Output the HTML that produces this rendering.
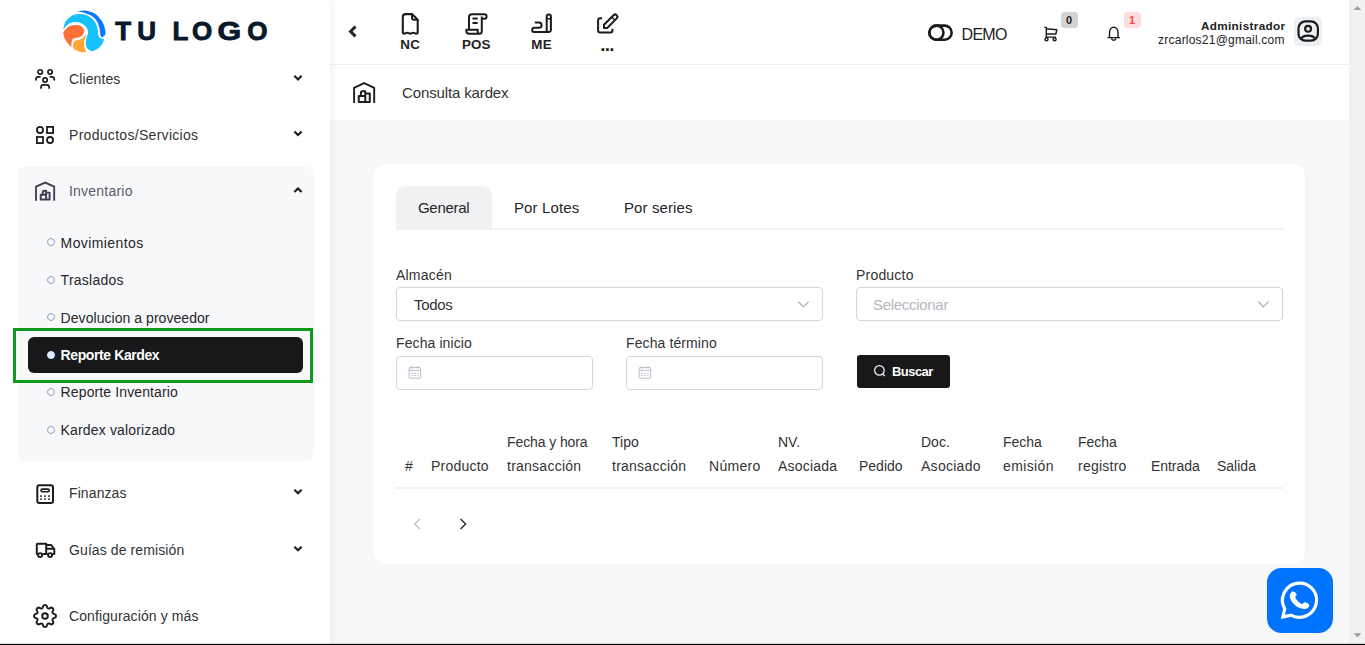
<!DOCTYPE html>
<html lang="es">
<head>
<meta charset="utf-8">
<title>Consulta kardex</title>
<style>
*{box-sizing:border-box;margin:0;padding:0}
html,body{width:1365px;height:645px;overflow:hidden;background:#f6f7f9}
body{position:relative;font-family:"Liberation Sans",sans-serif;color:#222;font-size:14px}
.abs{position:absolute}
.t{position:absolute;white-space:nowrap;line-height:1}
svg{position:absolute;overflow:visible}
/* sidebar */
#side{position:absolute;left:0;top:0;width:330px;height:645px;background:#fff;box-shadow:2px 0 9px rgba(20,30,50,.06);z-index:2}
#grp{position:absolute;left:17px;top:167px;width:297px;height:294px;background:#f7f8fa;border-radius:6.5px}
.mi{font-size:14px;color:#333;letter-spacing:.1px}
.si{font-size:14px;color:#26262b;letter-spacing:.15px}
.dot{position:absolute;width:8px;height:8px;border:1px solid #94a3c2;border-radius:50%;left:47px}
#pill{position:absolute;left:28px;top:337px;width:275px;height:36px;background:#18181b;border-radius:6px}
#hl{position:absolute;left:13px;top:328px;width:300px;height:55px;border:3px solid #109a1c}
/* header */
#head{position:absolute;left:330px;top:0;width:1019px;height:65px;background:#fff;border-bottom:1px solid #eeeff1}
#crumb{position:absolute;left:330px;top:65px;width:1019px;height:55px;background:#fff}
.hb{font-size:13.4px;font-weight:bold;color:#222;letter-spacing:.35px}
/* card */
#card{position:absolute;left:374px;top:164px;width:931px;height:399.5px;background:#fff;border-radius:12px}
.lbl{font-size:14px;color:#333}
.inp{position:absolute;height:34.4px;border:1px solid #d5d6d9;border-radius:4px;background:#fff}
.th{font-size:14px;color:#333;line-height:24px;position:absolute;white-space:nowrap}
/* scrollbar */
#sb{z-index:2;position:absolute;left:1349px;top:0;width:16px;height:645px;background:#f1f1f1}
#bl{z-index:5;position:absolute;left:0;top:643px;width:1365px;height:2px;background:linear-gradient(rgba(0,0,0,.13) 0,rgba(0,0,0,.13) 50%,#000 50%,#000 100%)}
</style>
</head>
<body>
<!-- ============ SIDEBAR ============ -->
<nav id="side">
  <!-- logo -->
  <svg id="logotxt" style="left:0;top:0" width="330" height="64"><text y="40" font-family="Liberation Sans, sans-serif" font-weight="bold" font-size="26" fill="#07192b" stroke="#07192b" stroke-width="0.9" stroke-linejoin="miter"><tspan x="115.2 137.3 160 172.6 192">TU LO</tspan><tspan x="217.4" textLength="23.6" lengthAdjust="spacingAndGlyphs">G</tspan><tspan x="247.2">O</tspan></text></svg>

  <div id="grp"></div>

  <div class="t mi" style="left:69px;top:72px">Clientes</div>
  <div class="t mi" style="left:69px;top:128px;letter-spacing:.3px">Productos/Servicios</div>
  <div class="t mi" style="left:69px;top:184px;color:#5b5b6b;letter-spacing:.22px">Inventario</div>

  <span class="dot" style="top:238px"></span><div class="t si" style="left:60.6px;top:236px;letter-spacing:.4px">Movimientos</div>
  <span class="dot" style="top:276px"></span><div class="t si" style="left:60.6px;top:273px;letter-spacing:.25px">Traslados</div>
  <span class="dot" style="top:313px"></span><div class="t si" style="left:60.6px;top:311px;letter-spacing:.05px">Devolucion a proveedor</div>
  <div id="pill"></div>
  <span class="dot" style="top:350.8px;left:47px;width:8px;height:8px;background:#dcebff;border-color:#dcebff"></span><div class="t si" style="left:60.6px;top:348px;color:#fff;font-weight:bold;letter-spacing:-.4px">Reporte Kardex</div>
  <div id="hl"></div>
  <span class="dot" style="top:388.4px"></span><div class="t si" style="left:60.6px;top:385px;letter-spacing:.12px">Reporte Inventario</div>
  <span class="dot" style="top:425.6px"></span><div class="t si" style="left:60.6px;top:423px">Kardex valorizado</div>

  <div class="t mi" style="left:69px;top:486px">Finanzas</div>
  <div class="t mi" style="left:69px;top:543px">Guías de remisión</div>
  <div class="t mi" style="left:69px;top:609px">Configuración y más</div>
</nav>

<!-- ============ HEADER ============ -->
<header id="head"></header>
<div id="crumb"></div>
<div class="t hb" style="left:400.2px;top:37.6px">NC</div>
<div class="t hb" style="left:462px;top:37.6px;letter-spacing:.1px">POS</div>
<div class="t hb" style="left:531.3px;top:37.6px">ME</div>
<div class="t hb" style="left:600.2px;top:34.8px;font-size:19px;letter-spacing:-.8px">...</div>
<div class="t" style="left:961.6px;top:27.2px;font-size:16px;color:#222;letter-spacing:-.75px">DEMO</div>
<div class="t" style="right:79.6px;top:19.9px;font-size:11.7px;font-weight:bold;color:#222;letter-spacing:.35px">Administrador</div>
<div class="t" style="right:80.3px;top:34px;font-size:12px;color:#222;letter-spacing:.22px">zrcarlos21@gmail.com</div>
<div class="abs" style="left:1294.2px;top:17px;width:28px;height:28.8px;border-radius:5px;background:#eef1f4"></div>
<div class="abs" style="left:1061px;top:12px;width:17px;height:16px;border-radius:4px;background:#d3d3d3"></div>
<div class="t" style="left:1066px;top:15px;font-size:11px;font-weight:bold;color:#222">0</div>
<div class="abs" style="left:1124px;top:12px;width:17px;height:16px;border-radius:4px;background:#ffdcdc"></div>
<div class="t" style="left:1129px;top:15px;font-size:11px;font-weight:bold;color:#f4484e">1</div>

<div class="t" style="left:402px;top:85px;font-size:15px;color:#333;letter-spacing:-.13px">Consulta kardex</div>

<!-- ============ CARD ============ -->
<main id="card"></main>
<div class="abs" style="left:396px;top:228px;width:887px;height:2px;background:#f1f3f5"></div>
<div class="abs" style="left:396px;top:186px;width:96px;height:43px;background:#eff1f3;border-radius:9px 9px 0 0"></div>
<div class="t" style="left:418px;top:200px;font-size:15px;color:#26262b;letter-spacing:-.3px">General</div>
<div class="t" style="left:514px;top:200px;font-size:15px;color:#26262b;letter-spacing:.12px">Por Lotes</div>
<div class="t" style="left:624px;top:200px;font-size:15px;color:#26262b;letter-spacing:.1px">Por series</div>

<div class="t lbl" style="left:396px;top:268px;letter-spacing:.2px">Almacén</div>
<div class="inp" style="left:396px;top:287px;width:427px"></div>
<div class="t" style="left:414px;top:297px;font-size:15px;color:#333;letter-spacing:-.3px">Todos</div>
<div class="t lbl" style="left:856px;top:268px;letter-spacing:.2px">Producto</div>
<div class="inp" style="left:856px;top:287px;width:427px"></div>
<div class="t" style="left:873px;top:297px;font-size:15px;color:#b5b8be;letter-spacing:-.3px">Seleccionar</div>

<div class="t lbl" style="left:396px;top:336px;letter-spacing:.1px">Fecha inicio</div>
<div class="inp" style="left:396px;top:356px;width:197px;height:34.4px"></div>
<div class="t lbl" style="left:626px;top:336px;letter-spacing:.1px">Fecha término</div>
<div class="inp" style="left:626px;top:356px;width:197px;height:34.4px"></div>

<div class="abs" style="left:857px;top:355px;width:93px;height:33px;background:#18181b;border-radius:3px"></div>
<div class="t" style="left:892px;top:365px;font-size:13px;font-weight:bold;color:#fff;letter-spacing:-.55px">Buscar</div>

<!-- table head -->
<div class="th" style="left:405px;top:454px">#</div>
<div class="th" style="left:431px;top:454px;letter-spacing:.22px">Producto</div>
<div class="th" style="left:507px;top:430px"><span style="letter-spacing:-.1px">Fecha y hora</span><br><span style="letter-spacing:.25px">transacción</span></div>
<div class="th" style="left:612px;top:430px">Tipo<br><span style="letter-spacing:.25px">transacción</span></div>
<div class="th" style="left:709px;top:454px;letter-spacing:.3px">Número</div>
<div class="th" style="left:778px;top:430px">NV.<br><span style="letter-spacing:.22px">Asociada</span></div>
<div class="th" style="left:859px;top:454px">Pedido</div>
<div class="th" style="left:921px;top:430px">Doc.<br><span style="letter-spacing:.27px">Asociado</span></div>
<div class="th" style="left:1003px;top:430px">Fecha<br><span style="letter-spacing:.37px">emisión</span></div>
<div class="th" style="left:1078px;top:430px">Fecha<br><span style="letter-spacing:.24px">registro</span></div>
<div class="th" style="left:1151px;top:454px;letter-spacing:-.05px">Entrada</div>
<div class="th" style="left:1217px;top:454px">Salida</div>
<div class="abs" style="left:396px;top:487px;width:887px;height:2px;background:#f0f2f4"></div>

<!-- whatsapp -->
<div class="abs" style="left:1267px;top:567.6px;width:65.5px;height:65.4px;border-radius:14.5px;background:#0073ff"></div>

<!-- scrollbar + bottom line -->
<div id="sb"></div>
<div id="bl"></div>
<!-- ============ ICON OVERLAY (page coordinates) ============ -->
<svg id="ico" style="left:0;top:0;pointer-events:none;z-index:3" width="1365" height="645" viewBox="0 0 1365 645" fill="none" stroke-linecap="butt" stroke-linejoin="miter">
<defs>
  <g id="wh">
    <path d="M0.9 18.2 V4 L10.1 0 L19.1 4 V18.2" />
    <path d="M5.6 12.2 H11 V16.8 H5.6 Z M11 10 H14.5 V16.8 H11 M7.7 12.2 V9.4 a1.3 1.3 0 0 1 1.3 -1.3 H11 V12.2" stroke-linejoin="round" stroke-width="1.95"/>
  </g>
  <path id="chd" d="M-3.6 -2 L0 1.6 L3.6 -2" stroke="#1c1c1c" stroke-width="2.15"/>
</defs>

<!-- logo -->
<svg x="55" y="3" width="60" height="57" viewBox="0 0 679 645" stroke="none">
<path fill="#0b79ff" d="M245.0 100.0 C259.2 97.5 295.8 81.7 330.0 85.0 C364.2 88.3 415.0 97.5 450.0 120.0 C485.0 142.5 519.7 185.0 540.0 220.0 C560.3 255.0 569.0 304.7 572.0 330.0 C575.0 355.3 560.3 365.0 558.0 372.0 C554.2 374.7 542.7 389.2 535.0 388.0 C527.3 386.8 515.8 368.8 512.0 365.0 C510.8 352.5 512.0 317.5 505.0 290.0 C498.0 262.5 487.5 225.0 470.0 200.0 C452.5 175.0 425.0 155.3 400.0 140.0 C375.0 124.7 345.8 114.7 320.0 108.0 C294.2 101.3 257.5 101.3 245.0 100.0 Z"/>
<path fill="#17c3ff" d="M93.0 300.0 C97.5 285.0 102.2 236.7 120.0 210.0 C137.8 183.3 170.0 154.2 200.0 140.0 C230.0 125.8 266.7 121.7 300.0 125.0 C333.3 128.3 373.3 142.5 400.0 160.0 C426.7 177.5 445.8 205.0 460.0 230.0 C474.2 255.0 479.7 286.7 485.0 310.0 C490.3 333.3 486.2 355.0 492.0 370.0 C497.8 385.0 509.3 393.3 520.0 400.0 C530.7 406.7 550.0 408.3 556.0 410.0 C551.7 420.0 542.7 451.7 530.0 470.0 C517.3 488.3 498.3 507.3 480.0 520.0 C461.7 532.7 430.0 541.7 420.0 546.0 C411.7 541.7 381.7 532.7 370.0 520.0 C358.3 507.3 352.5 490.0 350.0 470.0 C347.5 450.0 350.8 423.3 355.0 400.0 C359.2 376.7 375.8 351.7 375.0 330.0 C374.2 308.3 364.2 287.5 350.0 270.0 C335.8 252.5 311.7 234.2 290.0 225.0 C268.3 215.8 243.3 212.5 220.0 215.0 C196.7 217.5 171.2 225.8 150.0 240.0 C128.8 254.2 102.5 290.0 93.0 300.0 Z"/>
<path fill="#ff6f38" d="M93.0 335.0 C102.5 324.2 127.2 284.2 150.0 270.0 C172.8 255.8 205.0 250.8 230.0 250.0 C255.0 249.2 283.3 255.0 300.0 265.0 C316.7 275.0 326.7 295.8 330.0 310.0 C333.3 324.2 328.3 337.5 320.0 350.0 C311.7 362.5 297.5 376.7 280.0 385.0 C262.5 393.3 230.0 392.5 215.0 400.0 C200.0 407.5 195.0 413.3 190.0 430.0 C185.0 446.7 185.8 488.3 185.0 500.0 C177.5 491.7 153.3 468.3 140.0 450.0 C126.7 431.7 112.8 409.2 105.0 390.0 C97.2 370.8 95.0 344.2 93.0 335.0 Z"/>
<path fill="#ffa637" d="M350.0 345.0 C346.7 350.8 340.0 369.2 330.0 380.0 C320.0 390.8 306.7 402.5 290.0 410.0 C273.3 417.5 243.3 418.3 230.0 425.0 C216.7 431.7 214.2 437.5 210.0 450.0 C205.8 462.5 202.5 486.7 205.0 500.0 C207.5 513.3 221.7 525.0 225.0 530.0 C235.8 534.2 268.8 550.7 290.0 555.0 C311.2 559.3 341.7 555.8 352.0 556.0 C349.2 546.7 338.7 519.3 335.0 500.0 C331.3 480.7 328.3 458.3 330.0 440.0 C331.7 421.7 341.7 405.8 345.0 390.0 C348.3 374.2 349.2 352.5 350.0 345.0 Z"/>

</svg>

<!-- Clientes -->
<g stroke="#1c1c1c" stroke-width="1.7">
  <circle cx="40.2" cy="71.9" r="2.15"/><circle cx="50.1" cy="71.9" r="2.15"/><circle cx="45.1" cy="80" r="2.15"/>
  <path d="M40.6 76.9 H38.4 a2.5 2.5 0 0 0 -2.5 2.5 V80.6"/>
  <path d="M49.6 76.9 H51.8 a2.5 2.5 0 0 1 2.5 2.5 V80.6"/>
  <path d="M41 88.8 V87.3 a2.5 2.5 0 0 1 2.5 -2.5 h3.2 a2.5 2.5 0 0 1 2.5 2.5 V88.8"/>
</g>
<!-- Productos -->
<g stroke="#1c1c1c" stroke-width="1.8">
  <circle cx="40" cy="130" r="3.05"/><rect x="47" y="126.9" width="6.1" height="6.1"/>
  <rect x="36.9" y="137" width="6.1" height="6.1"/><circle cx="50.05" cy="140.05" r="3.05"/>
</g>
<!-- Inventario -->
<use href="#wh" x="35.1" y="182.6" stroke="#413f50" stroke-width="1.85"/>
<!-- Finanzas -->
<g stroke="#1c1c1c">
  <rect x="37.3" y="485.2" width="15.7" height="17.7" rx="2.2" stroke-width="2"/>
  <rect x="41" y="489.1" width="8.3" height="2.7" rx="1.35" stroke-width="1.6"/>
  <g fill="#1c1c1c" stroke="none">
    <rect x="40.2" y="495.3" width="1.6" height="1.6"/><rect x="44.2" y="495.3" width="1.6" height="1.6"/><rect x="48.2" y="495.3" width="1.6" height="1.6"/>
    <rect x="40.2" y="498.3" width="1.6" height="1.6"/><rect x="44.2" y="498.3" width="1.6" height="1.6"/><rect x="48.2" y="498.3" width="1.6" height="1.6"/>
  </g>
</g>
<!-- Guias -->
<g stroke="#1c1c1c" stroke-width="1.95" stroke-linejoin="round">
  <path d="M37.8 554 H36.8 V544.6 a.8 .8 0 0 1 .8 -.8 H46.2 V554 H42.6"/>
  <path d="M46.2 545 H51.2 L54.3 549 V554 H52.6 M46.2 554 H47.6 M46.2 548.7 H54"/>
  <circle cx="40.1" cy="555.1" r="2"/><circle cx="50.1" cy="555.1" r="2"/>
</g>
<!-- Config -->
<g stroke="#1c1c1c" stroke-width="1.9" stroke-linejoin="round">
  <path d="M42.44 608.11 L43.40 605.93 C43.22 604.74 46.78 604.74 46.60 605.93 L47.56 608.11 Q48.06 608.61 48.77 608.60 L51.00 607.75 C51.70 606.78 54.22 609.30 53.25 610.00 L52.40 612.23 Q52.39 612.94 52.89 613.44 L55.07 614.40 C56.26 614.22 56.26 617.78 55.07 617.60 L52.89 618.56 Q52.39 619.06 52.40 619.77 L53.25 622.00 C54.22 622.70 51.70 625.22 51.00 624.25 L48.77 623.40 Q48.06 623.39 47.56 623.89 L46.60 626.07 C46.78 627.26 43.22 627.26 43.40 626.07 L42.44 623.89 Q41.94 623.39 41.23 623.40 L39.00 624.25 C38.30 625.22 35.78 622.70 36.75 622.00 L37.60 619.77 Q37.61 619.06 37.11 618.56 L34.93 617.60 C33.74 617.78 33.74 614.22 34.93 614.40 L37.11 613.44 Q37.61 612.94 37.60 612.23 L36.75 610.00 C35.78 609.30 38.30 606.78 39.00 607.75 L41.23 608.60 Q41.94 608.61 42.44 608.11 Z"/>
  <circle cx="45" cy="616" r="2.8"/>
</g>
<!-- sidebar chevrons -->
<use href="#chd" x="298" y="77.8"/>
<use href="#chd" x="298" y="133.5"/>
<use href="#chd" x="298" y="190" transform="rotate(180 298 190)"/>
<use href="#chd" x="298" y="491.7"/>
<use href="#chd" x="298" y="548.7"/>

<!-- header: back chevron -->
<path d="M355.5 26.56 L350.6 31.45 L355.5 36.34" stroke="#222" stroke-width="3"/>
<!-- NC -->
<g stroke="#1c1c1c" stroke-width="2" stroke-linejoin="round">
  <path d="M402.8 32 V17 a2.9 2.9 0 0 1 2.9 -2.9 H412 L417.7 19.8 V32 Q417.7 33.7 416.1 33.7 C414.6 33.7 414.6 32.7 413.1 32.7 C411.6 32.7 411.6 33.7 410.1 33.7 C408.6 33.7 408.6 32.7 407.1 32.7 C405.6 32.7 405.6 33.7 404.3 33.7 Q402.8 33.7 402.8 32" stroke-width="2.1"/>
  <path d="M412 14.4 V18 a1.8 1.8 0 0 0 1.8 1.8 H417.5" stroke-width="2"/>
</g>
<!-- POS -->
<g stroke="#1c1c1c" stroke-width="2" stroke-linejoin="round">
  <path d="M469 29.7 V17.3 a3 3 0 0 1 3 -3 H484.4 a2.2 2.2 0 0 1 0 4.4 H481.8"/>
  <path d="M481.8 16.5 V31.3 a2.5 2.5 0 0 1 -2.5 2.5 H469 a2.7 2.7 0 0 1 -2.7 -2.7 V29.7 H477.7 V31.8 a2 2 0 0 0 2 2"/>
  <path d="M472.5 18.5 H477.7 M472.5 23 H477.7"/>
</g>
<!-- ME -->
<g stroke="#1c1c1c" stroke-width="2" stroke-linejoin="round" stroke-linecap="round">
  <path d="M535.6 22.6 H539 a2.6 2.6 0 0 1 0 5.2 H534.3 a2.1 2.1 0 0 0 0 4.2 H548.8 a2.1 2.1 0 0 0 2.1 -2.1 V16.5 a2.1 2.1 0 0 0 -4.2 0 V31.8"/>
  <path d="M546.7 18.8 H550.9" stroke-width="1.5"/>
</g>
<!-- Edit -->
<g stroke="#1c1c1c" stroke-width="2" stroke-linejoin="round">
  <path d="M602 18.3 H600.1 a2 2 0 0 0 -2 2 V30.6 a2 2 0 0 0 2 2 H610.4 a2 2 0 0 0 2 -2 V28.8"/>
  <path d="M604 28 V24.7 L613.5 15.2 a2.25 2.25 0 0 1 3.2 3.2 L607.2 28 Z"/>
  <path d="M611.7 17 L614.9 20.2" stroke-width="1.6"/>
</g>
<!-- toggle -->
<g stroke="#1c1c1c" stroke-width="2.55">
  <rect x="929.35" y="25.6" width="22.3" height="14.1" rx="7.05"/>
  <circle cx="936.4" cy="32.65" r="7.05"/>
</g>
<!-- cart -->
<g stroke="#1c1c1c" stroke-width="1.4" stroke-linejoin="round">
  <path d="M1044.3 27.4 H1046.3 V37.1 H1056 M1046.3 28.7 L1056.8 29.7 L1055.9 34 H1046.3"/>
  <circle cx="1046.5" cy="39.2" r="1.5"/><circle cx="1054.6" cy="39.2" r="1.5"/>
</g>
<!-- bell -->
<g stroke="#1c1c1c" stroke-width="1.4" stroke-linejoin="round">
  <path d="M1107.4 37.6 H1120.1 M1109.5 37.6 V32.4 a4.25 5.2 0 0 1 8.5 0 V37.6"/>
  <path d="M1111.4 38.4 a2.4 2.4 0 0 0 4.7 0"/>
</g>
<!-- avatar -->
<g stroke="#1c1c1c" stroke-width="2.2" stroke-linejoin="round">
  <rect x="1298.5" y="21.3" width="19.4" height="19.4" rx="7"/>
  <circle cx="1308.1" cy="28.8" r="2.95"/>
  <path d="M1301 39.3 C1302.6 34.4 1313.6 34.4 1315.3 39.3"/>
</g>
<!-- breadcrumb warehouse -->
<g stroke="#1f1f1f">
  <path d="M354.1 102.9 V87.8 L364.15 83.1 L374.2 87.8 V102.9" stroke-width="1.9"/>
  <path d="M358.75 96.1 H365.3 V101.9 H358.75 Z M365.3 93.4 H369.8 V101.9 H365.3 M360.9 96.1 V92.7 a1.5 1.5 0 0 1 1.5 -1.5 H365.3 V96.1" stroke-width="2" stroke-linejoin="round"/>
</g>

<!-- select chevrons -->
<path d="M798.2 301.6 L803.4 306.8 L808.6 301.6" stroke="#a0a3a9" stroke-width="1.1"/>
<path d="M1258.2 301.6 L1263.4 306.8 L1268.6 301.6" stroke="#a0a3a9" stroke-width="1.1"/>
<!-- calendars -->
<g id="cal" stroke="#b7bdca" stroke-width="1">
  <rect x="409.1" y="367.6" width="11.6" height="10.6" rx=".8"/>
  <path d="M409.1 370.3 H420.7 M411.6 366.1 V368.6 M418.1 366.1 V368.6"/>
  <path d="M411.2 373.3 H418.8 M411.2 375.6 H418.8" stroke-dasharray="1.7 1.25" stroke-width=".9"/>
</g>
<use href="#cal" x="230"/>
<!-- search -->
<g stroke="#f2f2f2" stroke-width="1.25" stroke-linecap="round">
  <circle cx="879.4" cy="370.4" r="4.75"/><path d="M883 374.2 L884.5 375.7"/>
</g>
<!-- pagination -->
<path d="M419.8 519 L414.8 524 L419.8 529" stroke="#c0c4cc" stroke-width="1.55"/>
<path d="M460.6 519 L465.6 524 L460.6 529" stroke="#303133" stroke-width="1.5"/>

<!-- whatsapp icon -->
<path d="M1284.7 608.75 L1282.9 616.9 L1291.45 615.3 A17.1 17.1 0 1 0 1284.7 608.75 Z" stroke="#fff" stroke-width="3.2" stroke-linejoin="miter" stroke-miterlimit="6"/>
<g transform="translate(1265 566) scale(0.10853)"><path d="M245.0 240.0 C239.2 246.3 228.3 261.3 228.0 275.0 C227.7 288.7 233.8 306.8 243.0 322.0 C252.2 337.2 267.7 354.3 283.0 366.0 C298.3 377.7 318.8 387.3 335.0 392.0 C351.2 396.7 368.0 398.0 380.0 394.0 C392.0 390.0 404.2 376.0 407.0 368.0 C409.8 360.0 403.8 351.7 397.0 346.0 C390.2 340.3 375.5 333.3 366.0 334.0 C356.5 334.7 350.7 352.0 340.0 350.0 C329.3 348.0 312.2 331.8 302.0 322.0 C291.8 312.2 280.8 300.3 279.0 291.0 C277.2 281.7 290.5 273.5 291.0 266.0 C291.5 258.5 286.7 250.8 282.0 246.0 C277.3 241.2 269.2 238.0 263.0 237.0 C256.8 236.0 250.8 233.7 245.0 240.0 Z" fill="#fff" stroke="none"/></g>
<!-- scrollbar arrows -->
<path d="M1353.7 10 L1357.5 5.9 L1361.3 10 Z" fill="#9d9d9d" stroke="none"/>
<path d="M1353.7 633.2 L1357.5 637.3 L1361.3 633.2 Z" fill="#9d9d9d" stroke="none"/>
</svg>
<!-- END ICON OVERLAY -->
</body>
</html>
